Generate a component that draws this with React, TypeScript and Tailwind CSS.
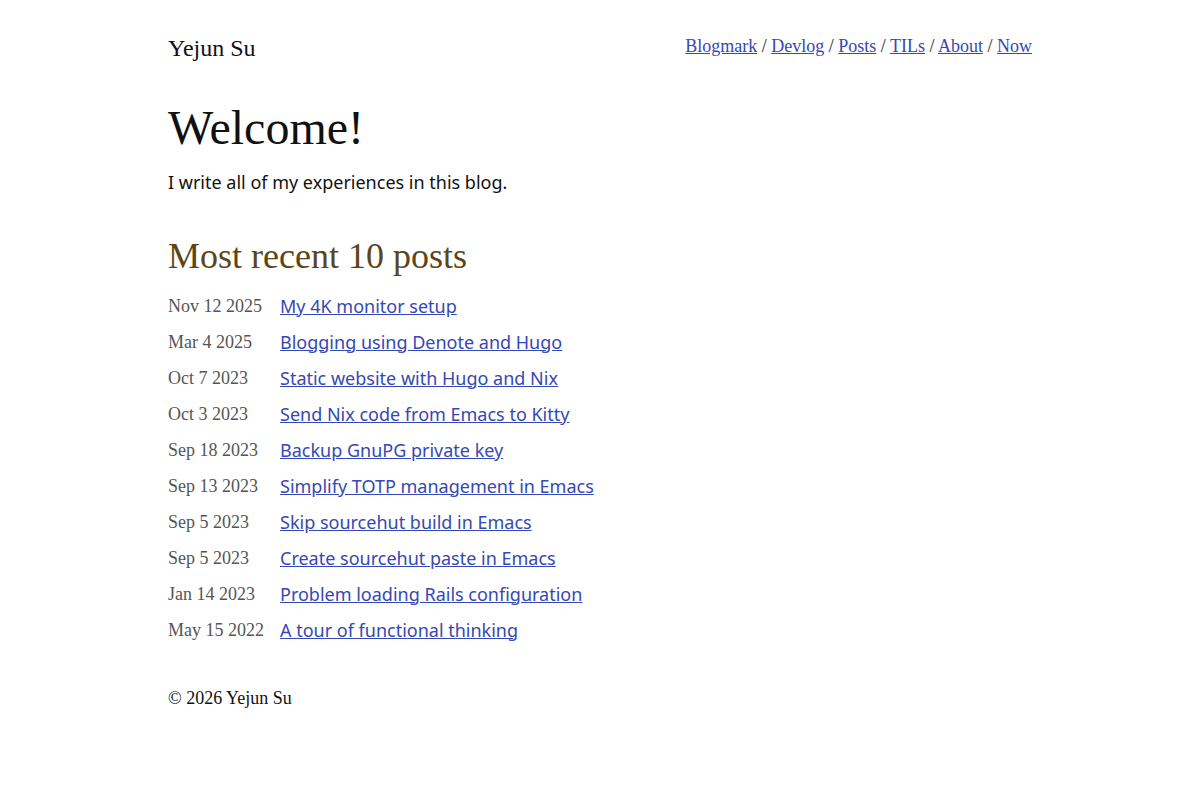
const serif = "font-['Liberation_Serif',serif]";
const sans = "font-['Noto_Sans',sans-serif]";

const posts = [
  ["Nov 12 2025", "My 4K monitor setup"],
  ["Mar 4 2025", "Blogging using Denote and Hugo"],
  ["Oct 7 2023", "Static website with Hugo and Nix"],
  ["Oct 3 2023", "Send Nix code from Emacs to Kitty"],
  ["Sep 18 2023", "Backup GnuPG private key"],
  ["Sep 13 2023", "Simplify TOTP management in Emacs"],
  ["Sep 5 2023", "Skip sourcehut build in Emacs"],
  ["Sep 5 2023", "Create sourcehut paste in Emacs"],
  ["Jan 14 2023", "Problem loading Rails configuration"],
  ["May 15 2022", "A tour of functional thinking"],
];

const nav = ["Blogmark", "Devlog", "Posts", "TILs", "About", "Now"];

export default function App() {
  return (
    <div className="min-h-screen bg-white text-[#111]">
      <div className="mx-auto w-[864px] pt-[32px]">
        <header className="flex items-start justify-between">
          <a href="#" className={`${serif} text-[24px] leading-[32px] text-[#111]`}>
            Yejun Su
          </a>
          <nav className={`${serif} text-[18px] leading-[28px] text-[#222]`}>
            {nav.map((n, i) => (
              <span key={n}>
                {i > 0 && " / "}
                <a href="#" className="text-[#3548b5] underline">
                  {n}
                </a>
              </span>
            ))}
          </nav>
        </header>

        <main className="mt-[36px]">
          <h1 className={`${serif} text-[48px] leading-[56px]`}>Welcome!</h1>
          <p className={`${sans} mt-[12px] text-[18px] leading-[28px]`}>
            I write all of my experiences in this blog.
          </p>

          <h2 className={`${serif} mt-[38px] text-[36px] leading-[44px] text-[#5c4516]`}>
            Most recent 10 posts
          </h2>
          <ul className="mt-[10px]">
            {posts.map(([date, title], i) => (
              <li key={i} className="flex h-[36px] items-center">
                <span className={`${serif} w-[112px] shrink-0 text-[18px] text-[#555]`}>
                  {date}
                </span>
                <a href="#" className={`${sans} text-[18px] text-[#3548b5] underline`}>
                  {title}
                </a>
              </li>
            ))}
          </ul>
        </main>

        <footer className={`${serif} mt-[36px] text-[18px] leading-[28px]`}>
          © 2026 Yejun Su
        </footer>
      </div>
    </div>
  );
}
